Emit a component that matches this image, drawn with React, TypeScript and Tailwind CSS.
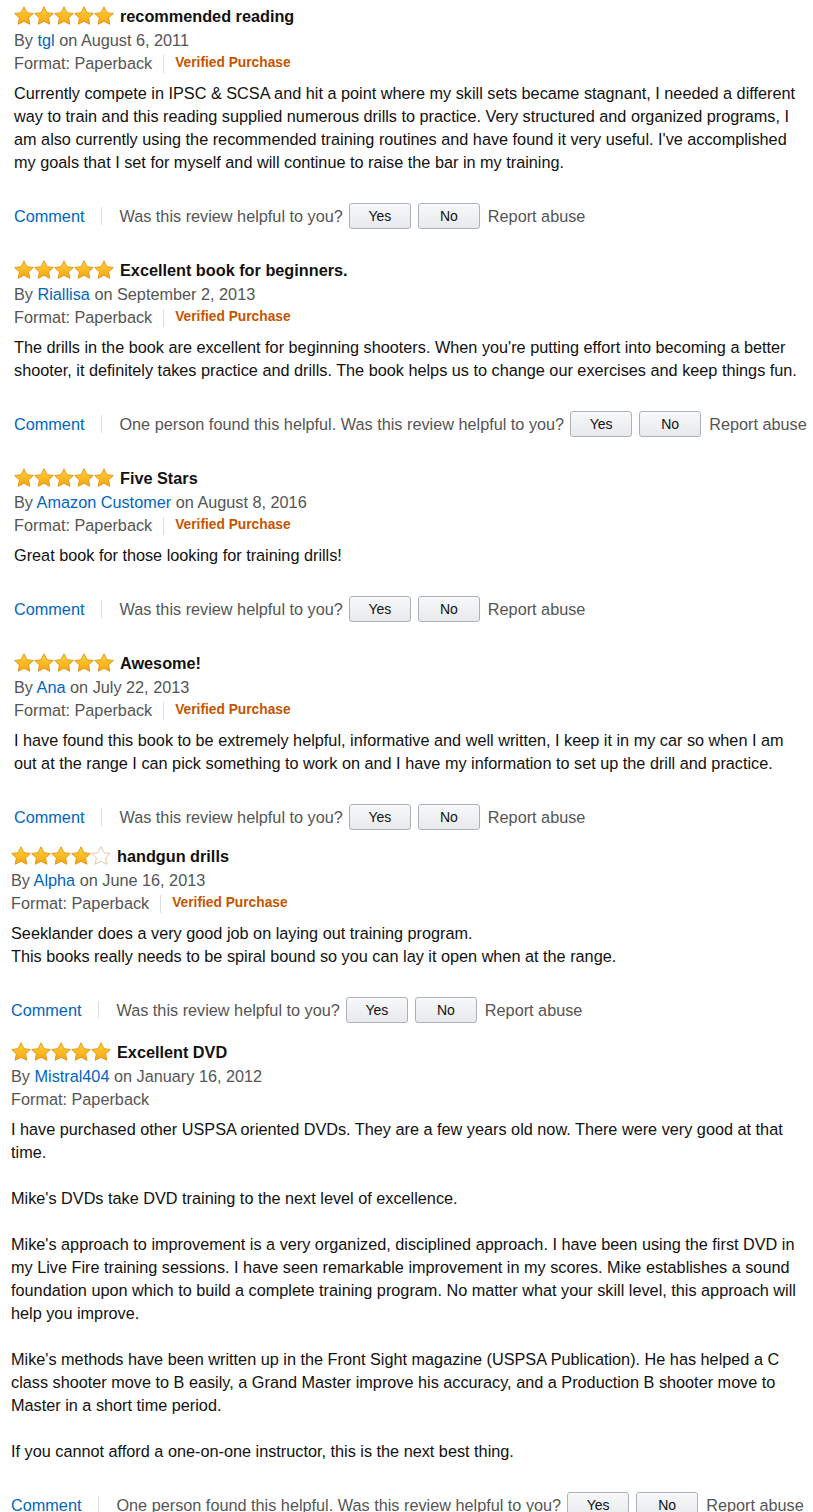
const font = { fontFamily: '"Liberation Sans", Arial, Helvetica, sans-serif' };

type Review = {
  stars: number;
  title: string;
  author: string;
  date: string;
  verified: boolean;
  body: string[][];
  helpful?: string;
  wrap: string;
};

const reviews: Review[] = [
  {
    stars: 5,
    title: "recommended reading",
    author: "tgl",
    date: "August 6, 2011",
    verified: true,
    body: [
      [
        "Currently compete in IPSC & SCSA and hit a point where my skill sets became stagnant, I needed a different",
        "way to train and this reading supplied numerous drills to practice. Very structured and organized programs, I",
        "am also currently using the recommended training routines and have found it very useful. I've accomplished",
        "my goals that I set for myself and will continue to raise the bar in my training.",
      ],
    ],
    wrap: "mt-[4px] pl-[14px]",
  },
  {
    stars: 5,
    title: "Excellent book for beginners.",
    author: "Riallisa",
    date: "September 2, 2013",
    verified: true,
    body: [
      [
        "The drills in the book are excellent for beginning shooters. When you're putting effort into becoming a better",
        "shooter, it definitely takes practice and drills. The book helps us to change our exercises and keep things fun.",
      ],
    ],
    helpful: "One person found this helpful.",
    wrap: "mt-[29px] pl-[14px]",
  },
  {
    stars: 5,
    title: "Five Stars",
    author: "Amazon Customer",
    date: "August 8, 2016",
    verified: true,
    body: [["Great book for those looking for training drills!"]],
    wrap: "mt-[29px] pl-[14px]",
  },
  {
    stars: 5,
    title: "Awesome!",
    author: "Ana",
    date: "July 22, 2013",
    verified: true,
    body: [
      [
        "I have found this book to be extremely helpful, informative and well written, I keep it in my car so when I am",
        "out at the range I can pick something to work on and I have my information to set up the drill and practice.",
      ],
    ],
    wrap: "mt-[29px] pl-[14px]",
  },
  {
    stars: 4,
    title: "handgun drills",
    author: "Alpha",
    date: "June 16, 2013",
    verified: true,
    body: [
      [
        "Seeklander does a very good job on laying out training program.",
        "This books really needs to be spiral bound so you can lay it open when at the range.",
      ],
    ],
    wrap: "mt-[14px] pl-[11px]",
  },
  {
    stars: 5,
    title: "Excellent DVD",
    author: "Mistral404",
    date: "January 16, 2012",
    verified: false,
    body: [
      [
        "I have purchased other USPSA oriented DVDs. They are a few years old now. There were very good at that",
        "time.",
      ],
      ["Mike's DVDs take DVD training to the next level of excellence."],
      [
        "Mike's approach to improvement is a very organized, disciplined approach. I have been using the first DVD in",
        "my Live Fire training sessions. I have seen remarkable improvement in my scores. Mike establishes a sound",
        "foundation upon which to build a complete training program. No matter what your skill level, this approach will",
        "help you improve.",
      ],
      [
        "Mike's methods have been written up in the Front Sight magazine (USPSA Publication). He has helped a C",
        "class shooter move to B easily, a Grand Master improve his accuracy, and a Production B shooter move to",
        "Master in a short time period.",
      ],
      ["If you cannot afford a one-on-one instructor, this is the next best thing."],
    ],
    helpful: "One person found this helpful.",
    wrap: "mt-[17px] pl-[11px]",
  },
];

const Star = ({ filled }: { filled: boolean }) => (
  <svg width="20" height="20" viewBox="0 0 20 20">
    <defs>
      <linearGradient id="sg" x1="0" y1="0" x2="0" y2="1">
        <stop offset="0" stopColor="#ffd43a" />
        <stop offset="1" stopColor="#f6a412" />
      </linearGradient>
    </defs>
    <path
      d="M10 0.8l2.85 5.85 6.45.85-4.7 4.45 1.2 6.35L10 15.25l-5.8 3.05 1.2-6.35L0.7 7.5l6.45-.85z"
      fill={filled ? "url(#sg)" : "#fff"}
      stroke={filled ? "#e0930f" : "#dcc19a"}
      strokeWidth="0.9"
      strokeLinejoin="round"
    />
  </svg>
);

const Btn = ({ label }: { label: string }) => (
  <button className="flex h-[26px] w-[62px] items-center justify-center rounded-[3px] border border-[#adb1b8] bg-gradient-to-b from-[#f7f8fa] to-[#e7e9ec] text-[14px] text-[#111] shadow-[0_1px_0_rgba(255,255,255,0.6)_inset]">
    {label}
  </button>
);

const ReviewBlock = ({ r }: { r: Review }) => (
  <div className={r.wrap}>
    <div className="flex h-[25px] items-start">
      <div className="flex h-[24px] items-center">
        {[0, 1, 2, 3, 4].map((i) => (
          <Star key={i} filled={i < r.stars} />
        ))}
        <span className="ml-[6px] text-[16.25px] font-bold text-[#111]">{r.title}</span>
      </div>
    </div>
    <div className="text-[16.25px] leading-[23px] text-[#555]">
      By <span className="text-[#0066c0]">{r.author}</span> on {r.date}
    </div>
    <div className="flex h-[23px] items-center text-[16.25px] text-[#555]">
      <span>Format: Paperback</span>
      {r.verified && (
        <>
          <span className="mx-[11px] h-[18px] w-px bg-[#ddd]" />
          <span className="text-[13.75px] font-bold text-[#c45500]">Verified Purchase</span>
        </>
      )}
    </div>
    <div className="mt-[7px] text-[16.25px] leading-[23px] text-[#111]">
      {r.body.map((para, pi) => (
        <div key={pi} className={pi > 0 ? "mt-[23px]" : ""}>
          {para.map((line, li) => (
            <div key={li} className="whitespace-nowrap">
              {line}
            </div>
          ))}
        </div>
      ))}
    </div>
    <div className="mt-[29px] flex h-[26px] items-center text-[16.25px] whitespace-nowrap">
      <span className="text-[#0066c0]">Comment</span>
      <span className="mx-[17px] h-[18px] w-px bg-[#ddd]" />
      <span className="text-[#555]">
        {r.helpful ? `${r.helpful} ` : ""}Was this review helpful to you?
      </span>
      <div className="ml-[6px] flex gap-[7px]">
        <Btn label="Yes" />
        <Btn label="No" />
      </div>
      <span className="ml-[8px] text-[#555]">Report abuse</span>
    </div>
  </div>
);

export default function App() {
  return (
    <div style={font} className="min-h-screen w-[813px] overflow-hidden bg-white">
      {reviews.map((r, i) => (
        <ReviewBlock key={i} r={r} />
      ))}
    </div>
  );
}
